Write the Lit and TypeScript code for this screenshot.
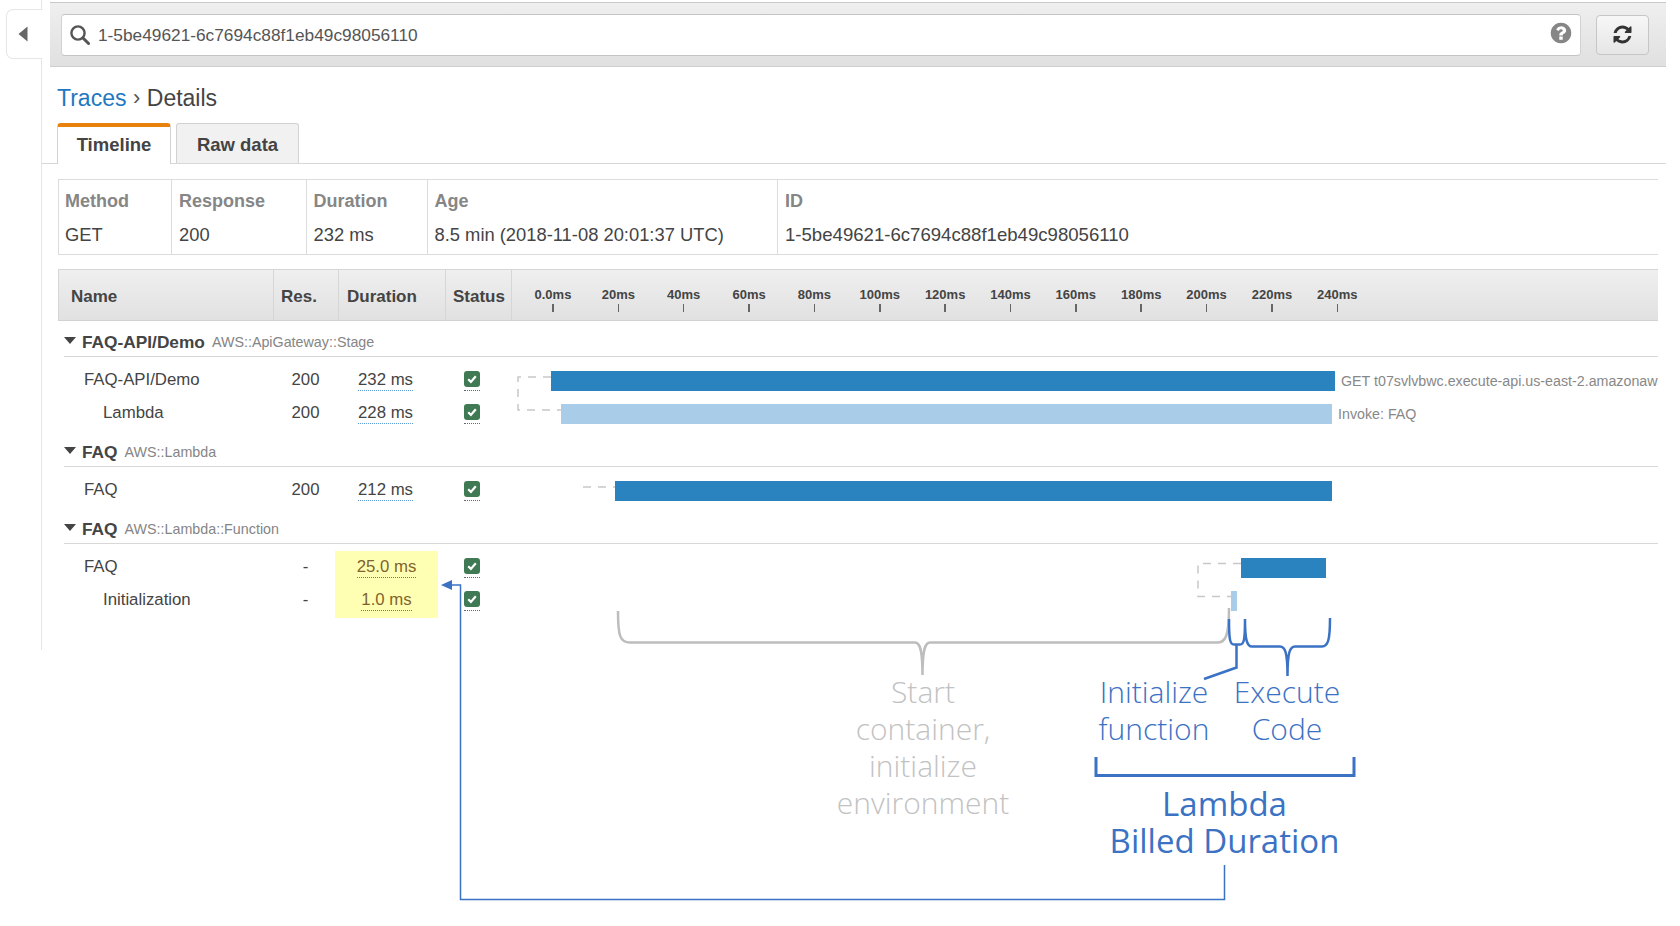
import { LitElement, html, css, svg } from "lit";
import { customElement } from "lit/decorators.js";

const REFRESH = "M1639 1056q0 5-1 7-64 268-268 434.5t-478 166.5q-146 0-282.5-55t-243.5-157l-129 129q-19 19-45 19t-45-19-19-45v-448q0-26 19-45t45-19h448q26 0 45 19t19 45-19 45l-137 137q71 66 161 102t187 36q134 0 250-65t186-179q11-17 53-117 8-23 30-23h192q13 0 22.5 9.5t9.5 22.5zm25-800v448q0 26-19 45t-45 19h-448q-26 0-45-19t-19-45 19-45l138-138q-148-137-349-137-134 0-250 65t-186 179q-11 17-53 117-8 23-30 23h-199q-13 0-22.5-9.5t-9.5-22.5v-7q65-268 270-434.5t480-166.5q146 0 284 55.5t245 156.5l130-129q19-19 45-19t45 19 19 45z";
const HELP = "M1024 1376v-192q0-14-9-23t-23-9h-192q-14 0-23 9t-9 23v192q0 14 9 23t23 9h192q14 0 23-9t9-23zm256-672q0-88-55.5-163t-138.5-116-170-41q-243 0-371 213-15 24 8 42l132 100q7 6 19 6 16 0 25-12 53-68 86-92 34-24 86-24 48 0 85.5 26t37.5 59q0 38-20 61t-68 45q-63 28-115.5 86.5t-52.5 125.5v36q0 14 9 23t23 9h192q14 0 23-9t9-23q0-19 21.5-49.5t54.5-49.5q32-18 49-28.5t46-35 44.5-48 28-60.5 12.5-81zm384 192q0 209-103 385.5t-279.5 279.5-385.5 103-385.5-103-279.5-279.5-103-385.5 103-385.5 279.5-279.5 385.5-103 385.5 103 279.5 279.5 103 385.5z";

interface Row { name: string; sub?: boolean; res: string; dur: string; hl?: boolean; ml: number; w: number; light?: boolean; label?: string; }
interface Group { title: string; type: string; rows: Row[]; }

const GROUPS: Group[] = [
  { title: "FAQ-API/Demo", type: "AWS::ApiGateway::Stage", rows: [
    { name: "FAQ-API/Demo", res: "200", dur: "232 ms", ml: 39, w: 784, label: "GET t07svlvbwc.execute-api.us-east-2.amazonaws.com" },
    { name: "Lambda", sub: true, res: "200", dur: "228 ms", ml: 49, w: 771, light: true, label: "Invoke: FAQ" },
  ]},
  { title: "FAQ", type: "AWS::Lambda", rows: [
    { name: "FAQ", res: "200", dur: "212 ms", ml: 103, w: 717 },
  ]},
  { title: "FAQ", type: "AWS::Lambda::Function", rows: [
    { name: "FAQ", res: "-", dur: "25.0 ms", hl: true, ml: 729, w: 85 },
    { name: "Initialization", sub: true, res: "-", dur: "1.0 ms", hl: true, ml: 719, w: 6, light: true },
  ]},
];
const TICKS = ["0.0ms","20ms","40ms","60ms","80ms","100ms","120ms","140ms","160ms","180ms","200ms","220ms","240ms"];
const SUMMARY = [["Method","GET"],["Response","200"],["Duration","232 ms"],["Age","8.5 min (2018-11-08 20:01:37 UTC)"],["ID","1-5be49621-6c7694c88f1eb49c98056110"]];

@customElement("app-root")
export class AppRoot extends LitElement {
  static styles = css`
    :host { display:block; position:relative; width:1680px; height:926px; overflow:hidden; background:#fff; font-family:"Liberation Sans",Arial,sans-serif; color:#444; }
    .page { display:flex; align-items:flex-start; }
    .rail { width:42px; height:650px; flex:none; border-right:1.5px solid #e6e6e6; box-sizing:border-box; padding-top:9px; display:flex; justify-content:flex-end; }
    .toggle { width:37px; height:50px; margin-right:-1.5px; box-sizing:border-box; border:1.5px solid #e6e6e6; border-right:1.5px solid #fff; border-radius:7px 0 0 7px; background:#fff; display:flex; align-items:center; padding-left:11px; }
    .main { width:1624px; flex:none; padding-top:2px; }
    .toolbar { margin-left:8px; height:65px; box-sizing:border-box; border-top:1.5px solid #c9c9c9; border-bottom:1.5px solid #cfcfcf; background:linear-gradient(#efefef,#e0e0e0); display:flex; align-items:center; padding:0 17px 0 11px; gap:15px; }
    .search { flex:1; height:42px; box-sizing:border-box; background:#fff; border:1px solid #d2d2d2; border-top:1.5px solid #c4c4c4; border-bottom:1.5px solid #c4c4c4; border-radius:4px; display:flex; align-items:center; padding:0 7px 0 8px; font-size:17.3px; color:#555; }
    .search span { flex:1; margin-left:8px; padding-top:2px; }
    .help { margin-top:-3px; }
    .refresh { width:53px; height:40px; flex:none; box-sizing:border-box; border:1px solid #c6c6c6; border-radius:4px; background:linear-gradient(#f7f7f7,#e6e6e6); display:flex; align-items:center; justify-content:center; }
    .crumb { margin:19px 0 0 15px; height:24px; line-height:24px; font-size:23px; color:#444; display:flex; gap:6.5px; }
    .crumb a { color:#1f78c1; text-decoration:none; }
    .crumb i { font-style:normal; font-size:22px; color:#555; }
    .tabs { margin-top:13px; height:41px; box-sizing:border-box; border-bottom:1.5px solid #d8d8d8; padding-left:15px; display:flex; gap:5px; }
    .tab { height:40px; box-sizing:border-box; font-size:18.5px; font-weight:bold; color:#444; display:flex; align-items:center; justify-content:center; border:1px solid #d2d2d2; border-bottom:none; border-radius:3px 3px 0 0; background:#f1f1f1; }
    .tab.on { width:114px; height:41px; background:#fff; border-top:4px solid #e8820c; border-radius:4px 4px 0 0; padding-bottom:2px; }
    .tab.off { width:123px; padding-top:3px; }
    .content { margin-left:16px; width:1600px; }
    .summary { margin-top:15px; display:grid; grid-template-columns:112px 134.5px 121px 350.5px 1fr; box-sizing:border-box; height:76px; border:solid #dcdcdc; border-width:1.5px 0 1.5px 1.5px; }
    .sc { padding:11px 7px 0; border-left:1.5px solid #dcdcdc; font-size:18.35px; line-height:20px; white-space:nowrap; }
    .sc:first-child { border-left:none; padding-left:6px; }
    .sc:last-child { font-size:18.6px; }
    .sc b { display:block; font-size:18px; color:#868686; margin-bottom:14px; }
    .thead { margin-top:14px; height:51.5px; box-sizing:border-box; border-top:1.5px solid #d6d6d6; border-bottom:1.5px solid #d2d2d2; background:linear-gradient(#efefef,#e1e1e1); display:grid; grid-template-columns:215px 65px 107px 66px 1fr; font-size:17px; font-weight:bold; color:#444; }
    .th { display:flex; align-items:center; padding:4px 0 0 7px; border-left:1.5px solid #d6d6d6; box-sizing:border-box; }
    .th:first-child { padding-left:12px; }
    .th:nth-child(3) { padding-left:8px; }
    .ticks { border-left:1.5px solid #d6d6d6; display:flex; padding:17px 0 0 8.3px; }
    .tick { width:65.36px; flex:none; text-align:center; font-size:13px; line-height:16px; color:#444; }
    .tick::after { content:""; display:block; width:1.5px; height:8px; background:#666; margin:1px auto 0; }
    .group { margin-top:3px; }
    .thead + .group { margin-top:1px; }
    .ghead { height:35px; box-sizing:border-box; margin-left:6px; border-bottom:1.5px solid #d8d8d8; display:flex; align-items:flex-end; padding-bottom:3.5px; line-height:20px; }
    .caret { width:0; height:0; border:6px solid transparent; border-top:7px solid #444; border-bottom:none; margin:0 6px 8px 0; flex:none; }
    .ghead b { font-size:17.3px; color:#444; }
    .ghead span { font-size:14.3px; color:#858585; margin-left:7px; }
    .rows { padding-top:6px; }
    .row { height:33px; display:grid; grid-template-columns:214px 67px 93px 80px 1fr; align-items:center; font-size:16.8px; color:#444; }
    .name { padding:2px 0 0 26px; white-space:nowrap; }
    .name.sub { padding-left:45px; }
    .res { text-align:center; padding-top:2px; }
    .dur { text-align:center; height:33px; box-sizing:border-box; padding-top:2px; display:flex; align-items:center; justify-content:center; }
    .dur span { line-height:20px; border-bottom:1.5px dotted #5b9bd8; }
    .dur.hl { background:linear-gradient(#ffffb4,#ffffb4) 0 1.5px / 100% 100% no-repeat; margin:0 -6px 0 -4px; box-shadow:0 2px 0 #ffffb4; color:#80632c; }
    .dur.hl span { border-bottom-color:#777; }
    .status { display:flex; flex-direction:column; align-items:center; padding-top:4px; }
    .chk { width:16px; height:16px; border-radius:3px; background:#3f7a55; display:flex; align-items:center; justify-content:center; }
    .dots { width:16px; height:0; border-top:1.5px dotted #667; margin-top:2.5px; }
    .track { display:flex; align-items:center; height:33px; box-sizing:border-box; padding-top:3px; min-width:0; overflow:hidden; white-space:nowrap; }
    .bar { height:20px; flex:none; background:#2a82bf; }
    .bar.light { background:#a9cde8; }
    .lbl { font-size:14.25px; color:#888; margin-left:6px; }
    .over { position:absolute; left:0; top:0; pointer-events:none; }
    .thin { font-family:"Open Sans",sans-serif; font-weight:300; font-size:30px; text-anchor:middle; }
    .bold { font-family:"Open Sans",sans-serif; font-weight:500; font-size:33px; text-anchor:middle; fill:#3b72c4; }
  `;

  private row(r: Row) {
    return html`<div class="row">
      <div class="name ${r.sub ? "sub" : ""}">${r.name}</div>
      <div class="res">${r.res}</div>
      <div class="dur ${r.hl ? "hl" : ""}"><span>${r.dur}</span></div>
      <div class="status"><div class="chk"><svg width="12" height="12" viewBox="0 0 12 12"><path d="M2.2 6.2 L4.9 8.9 L9.8 3.2" fill="none" stroke="#fff" stroke-width="2.2"/></svg></div><div class="dots"></div></div>
      <div class="track"><div class="bar ${r.light ? "light" : ""}" style="margin-left:${r.ml}px;width:${r.w}px"></div>${r.label ? html`<span class="lbl">${r.label}</span>` : ""}</div>
    </div>`;
  }

  private overlay() {
    const dash = "#c8c8c8", blue = "#3b72c4", grey = "#bdbdbd";
    return svg`
      <g fill="none" stroke="${dash}" stroke-width="1.5" stroke-dasharray="8 7">
        <path d="M551 377H518V410H561"/>
        <path d="M583 487H615"/>
        <path d="M1241 563.5H1198V596.5H1231"/>
      </g>
      <path d="M618 611 C618 636 620 642.5 630 642.5 H915 C920 642.5 922.5 650 922.5 675 C922.5 650 925 642.5 930 642.5 H1218 C1226 642.5 1229 634 1229 608" fill="none" stroke="${grey}" stroke-width="2.5"/>
      <g fill="none" stroke="${blue}" stroke-width="2.5">
        <path d="M1229 619 C1229 640 1230 644.5 1234 644.5 H1240 C1244 644.5 1245 640 1245 619 C1245 640 1247 646.5 1252 646.5 H1280 C1285 646.5 1287.5 652 1287.5 676 C1287.5 652 1290 646.5 1295 646.5 H1322 C1328 646.5 1330 640 1330 618"/>
        <path d="M1236.5 645 V667.5 L1204 679"/>
        <path d="M1096 757 V775.5 H1354 V757" stroke-width="3"/>
      </g>
      <path d="M1224.5 865 V899.5 H460.5 V585 H450" fill="none" stroke="${blue}" stroke-width="1.5"/>
      <path d="M441 585 L452 580 V590 Z" fill="${blue}"/>
      <g class="thin" fill="#c2c2c2">
        <text x="923" y="703">Start</text>
        <text x="923" y="740">container,</text>
        <text x="923" y="777">initialize</text>
        <text x="923" y="814">environment</text>
      </g>
      <g class="thin" fill="${blue}">
        <text x="1154" y="703">Initialize</text>
        <text x="1154" y="740">function</text>
        <text x="1287" y="703">Execute</text>
        <text x="1287" y="740">Code</text>
      </g>
      <text class="bold" x="1224.5" y="816">Lambda</text>
      <text class="bold" x="1224.5" y="853">Billed Duration</text>
    `;
  }

  render() {
    return html`
      <div class="page">
        <div class="rail"><div class="toggle"><svg width="10" height="16" viewBox="0 0 10 16"><path d="M9.5 0.5V15.5L0.5 8Z" fill="#666"/></svg></div></div>
        <div class="main">
          <div class="toolbar">
            <div class="search">
              <svg width="20" height="20" viewBox="0 0 20 20"><circle cx="8" cy="8" r="6.6" fill="none" stroke="#555" stroke-width="2.4"/><path d="M13 13 L18.5 18.5" stroke="#555" stroke-width="3" stroke-linecap="round"/></svg>
              <span>1-5be49621-6c7694c88f1eb49c98056110</span>
              <svg class="help" width="24" height="24" viewBox="0 0 1792 1792"><path d="${HELP}" fill="#868686"/></svg>
            </div>
            <div class="refresh"><svg width="21" height="21" viewBox="0 0 1792 1792"><path d="${REFRESH}" fill="#333"/></svg></div>
          </div>
          <div class="crumb"><a>Traces</a><i>›</i><span>Details</span></div>
          <div class="tabs"><div class="tab on">Timeline</div><div class="tab off">Raw data</div></div>
          <div class="content">
            <div class="summary">${SUMMARY.map(([k, v]) => html`<div class="sc"><b>${k}</b>${v}</div>`)}</div>
            <div class="thead">
              <div class="th">Name</div><div class="th">Res.</div><div class="th">Duration</div><div class="th">Status</div>
              <div class="ticks">${TICKS.map((t) => html`<div class="tick">${t}</div>`)}</div>
            </div>
            ${GROUPS.map((g) => html`<div class="group">
              <div class="ghead"><div class="caret"></div><b>${g.title}</b><span>${g.type}</span></div>
              <div class="rows">${g.rows.map((r) => this.row(r))}</div>
            </div>`)}
          </div>
        </div>
      </div>
      <svg class="over" width="1680" height="926" viewBox="0 0 1680 926">${this.overlay()}</svg>
    `;
  }
}
